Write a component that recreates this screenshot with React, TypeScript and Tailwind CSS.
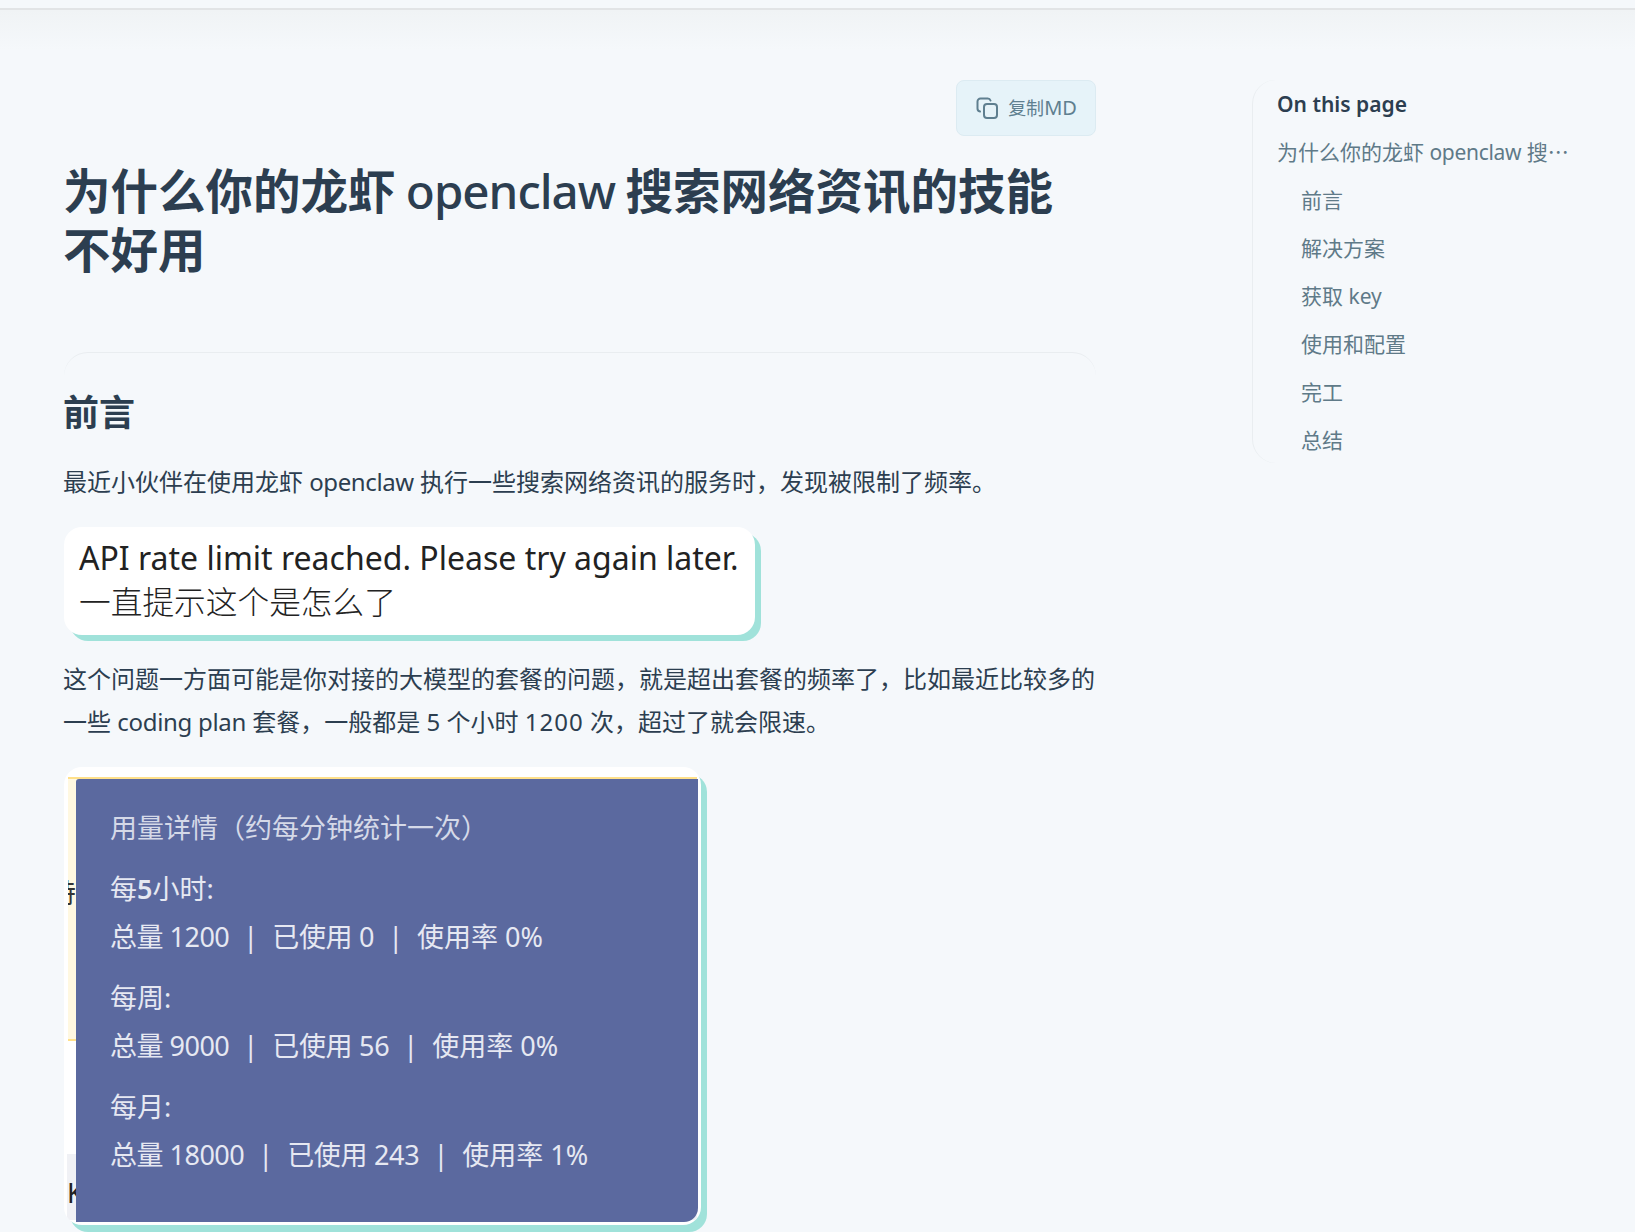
const cjk = '"Noto Sans", "Noto Sans CJK SC", sans-serif';

const tocItems = ['前言', '解决方案', '获取 key', '使用和配置', '完工', '总结'];

const usageRows = [
  { label: <>每<b className="font-semibold">5</b>小时:</>, total: '总量 1200', used: '已使用 0', rate: '使用率 0%' },
  { label: '每周:', total: '总量 9000', used: '已使用 56', rate: '使用率 0%' },
  { label: '每月:', total: '总量 18000', used: '已使用 243', rate: '使用率 1%' },
];

const CopyIcon = () => {
  return (
    <svg width="24" height="24" viewBox="0 0 24 24" fill="none" stroke="currentColor" strokeWidth="2" strokeLinecap="round">
      <rect x="9" y="8" width="13" height="14" rx="3" />
      <path d="M5 15.5A3 3 0 0 1 2.5 12.5V5.5A3 3 0 0 1 5.5 2.5H12.5A3 3 0 0 1 15.5 4.5" />
    </svg>
  );
};

const UsagePanel = () => {
  return (
    <div className="absolute top-[12px] bottom-[3px] left-[12px] right-[3px] rounded-br-[14px] rounded-tl-[3px] bg-[#5b699f] pl-[34px] pt-[25px] text-[27px] leading-[48px] text-[#e6e8f2]">
      <p className="text-[#d5d9e8]">用量详情（约每分钟统计一次）</p>
      {usageRows.map((row, i) => (
        <div key={i} className="mt-[13px]">
          <p>{row.label}</p>
          <p className="flex gap-[14px]">
            <span className="tracking-[-0.5px]">{row.total}</span>
            <span>|</span>
            <span className="tracking-[-0.3px]">{row.used}</span>
            <span>|</span>
            <span>{row.rate}</span>
          </p>
        </div>
      ))}
    </div>
  );
};

const App = () => {
  return (
    <div className="h-[1232px] overflow-hidden bg-[#f5f8fb]" style={{ fontFamily: cjk }}>
      {/* 顶部导航 */}
      <div className="h-[10px] border-b-2 border-[#e2e4e6] bg-[#f5f8fb]" />
      <div className="h-[40px] bg-gradient-to-b from-[#f0f3f5] to-[#f5f8fb]" />

      <div className="flex">
        {/* 正文 */}
        <main className="ml-[63px] w-[1033px] shrink-0 pt-[30px] text-[#2c3e50]">
          <div className="flex justify-end">
            <button className="flex h-[56px] w-[140px] items-center justify-center gap-[9px] rounded-[8px] border border-[#dcebf2] bg-[#e6f3f9] text-[#5f7f90]">
              <CopyIcon />
              <span className="flex items-baseline text-[20px]">
                <span className="text-[18px]">复制</span>MD
              </span>
            </button>
          </div>

          <h1 className="mt-[25px] text-[47.5px] leading-[59px] font-bold [word-spacing:-2px]">
            为什么你的龙虾 <span className="font-medium tracking-[-1px]">openclaw</span> 搜索网络资讯的技能不好用
          </h1>

          <div className="mt-[73px] ml-px h-[30px] rounded-t-[24px] border-t border-[#e9edf0]" />

          <h2 className="mt-[6px] text-[36px] leading-[50px] font-bold">前言</h2>
          <p className="mt-[22px] text-[24px] leading-[43px]">
            最近小伙伴在使用龙虾 <span className="tracking-[-0.4px]">openclaw</span> 执行一些搜索网络资讯的服务时，发现被限制了频率。
          </p>

          <div className="mt-[24px] ml-px h-[108px] w-[691px] rounded-[18px] bg-white pt-[9px] pl-[15px] leading-[44px] text-[#222] shadow-[6px_6px_0_#a0e2da]">
            <p className="text-[32px]">API rate limit reached. Please try again later.</p>
            <p className="text-[31.7px] font-light">一直提示这个是怎么了</p>
          </div>

          <p className="mt-[23px] text-[24px] leading-[42.5px]">
            这个问题一方面可能是你对接的大模型的套餐的问题，就是超出套餐的频率了，比如最近比较多的一些 <span className="tracking-[-0.3px]">coding plan</span> 套餐，一般都是{' '}
            <span className="[font-kerning:none]">
              5 个小时 <span className="tracking-[1px]">1200</span> 次，
            </span>
            超过了就会限速。
          </p>

          <div className="relative mt-[24px] ml-px h-[458px] w-[637px] overflow-hidden rounded-[18px] bg-white shadow-[6px_7px_0_#a0e2da]">
            {/* 底图露出的部分 */}
            <div className="mx-[4px] mt-[10px] flex h-[264px] items-center overflow-hidden border-y-2 border-[#ffe08a] bg-[#fff8e1] pb-[32px] text-[27px] text-[#333]">
              <span className="-ml-[19px]">特</span>
            </div>
            <div className="mt-[113px] mr-[4px] ml-[3px] flex h-[66px] items-center bg-[#f0f1f5] pt-[12px] text-[27px] text-[#222]">
              <span>K</span>
            </div>
            <UsagePanel />
          </div>
        </main>

        {/* 目录 */}
        <aside className="mt-[30px] ml-[156px] h-[383px] w-[320px] rounded-l-[24px] border-l border-[#e9edf0] pl-[24px] text-[21px] leading-[48px] text-[#5f7a88]">
          <p className="font-semibold text-[#2c3e50]">On this page</p>
          <p>
            为什么你的龙虾 <span className="tracking-[-0.3px]">openclaw</span> 搜⋯
          </p>
          {tocItems.map((item) => (
            <p key={item} className="pl-[24px]">
              {item}
            </p>
          ))}
        </aside>
      </div>
    </div>
  );
};

export default App;
